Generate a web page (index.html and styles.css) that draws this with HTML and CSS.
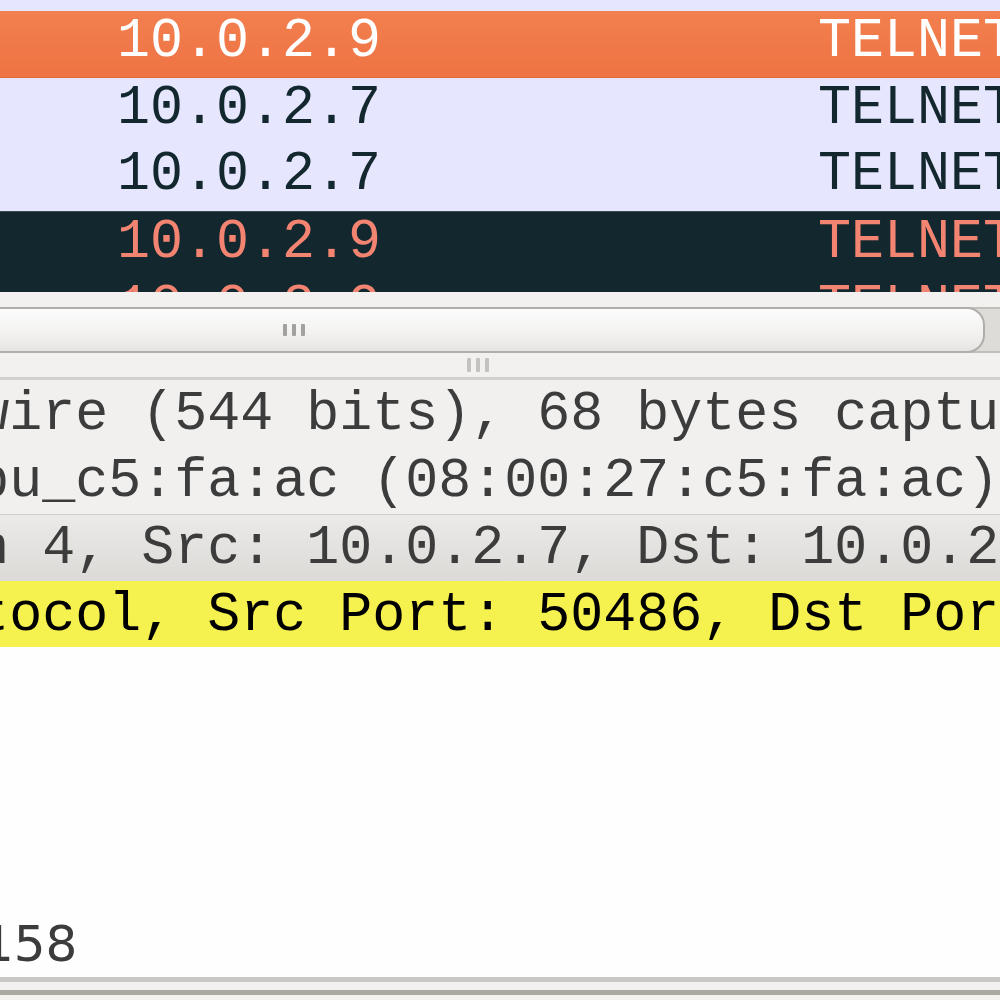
FILE: index.html
```html
<!DOCTYPE html>
<html>
<head>
<meta charset="utf-8">
<link rel="stylesheet" href="styles.css">
</head>
<body>
<div class="app">
  <div class="list">
    <div class="row tcp partial-top"></div>
    <div class="row selected"><span class="c-dst">10.0.2.9</span><span class="c-proto">TELNET</span></div>
    <div class="row tcp"><span class="c-dst">10.0.2.7</span><span class="c-proto">TELNET</span></div>
    <div class="row tcp"><span class="c-dst">10.0.2.7</span><span class="c-proto">TELNET</span></div>
    <div class="row bad"><span class="c-dst">10.0.2.9</span><span class="c-proto">TELNET</span></div>
    <div class="row bad partial-bottom"><span class="c-dst">10.0.2.9</span><span class="c-proto">TELNET</span></div>
  </div>
  <div class="hscroll">
    <div class="hscroll-gap"></div>
    <div class="trough">
      <div class="thumb"><span class="grip"><i></i><i></i><i></i></span></div>
    </div>
  </div>
  <div class="splitter"><span class="grip grip-split"><i></i><i></i><i></i></span></div>
  <div class="tree">
    <div class="tree-inner">
      <div class="node">Frame 1158: 68 bytes on wire (544 bits), 68 bytes captured (544 bits) on interface 0</div>
      <div class="node">Ethernet II, Src: PcsCompu_c5:fa:ac (08:00:27:c5:fa:ac), Dst: PcsCompu_8f:3a:0b</div>
      <div class="node hover">Internet Protocol Version 4, Src: 10.0.2.7, Dst: 10.0.2.9</div>
      <div class="node warn">Transmission Control Protocol, Src Port: 50486, Dst Port: 23, Seq: 1, Ack: 1</div>
    </div>
  </div>
  <div class="bytes">
    <div class="bytes-line">158</div>
  </div>
  <div class="statusbar">
    <div class="sb-line1"></div>
    <div class="sb-mid"></div>
    <div class="sb-line2"></div>
    <div class="sb-bottom"></div>
  </div>
</div>
</body>
</html>
```

FILE: styles.css
```css
* { box-sizing: border-box; }
html, body { margin: 0; padding: 0; }
body {
  width: 1000px;
  height: 1000px;
  overflow: hidden;
  background: #f2f1f0;
}
.app {
  display: flex;
  flex-direction: column;
  width: 1000px;
  height: 1000px;
  overflow: hidden;
}

/* packet list */
.list {
  height: 292px;
  flex: none;
  overflow: hidden;
  background: #e7e6ff;
  font-family: "Liberation Mono", monospace;
  font-size: 55px;
}
.row {
  display: flex;
  height: 66.5px;
  line-height: 62px;
  white-space: nowrap;
  overflow: hidden;
}
.row.partial-top { height: 11px; }
.row.partial-bottom { height: 15px; }
.c-dst {
  width: 818px;
  padding-left: 117px;
  flex: none;
}
.c-proto { flex: none; }
.tcp { background: #e7e6ff; color: #12272e; }
.selected {
  background: linear-gradient(#f27f4f, #ef7343);
  color: #ffffff;
  border-bottom: 1px solid #e46b3a;
}
.bad { background: #12272e; color: #f48472; }
.bad:not(.partial-bottom) { border-top: 1px solid #3d4b52; }

/* horizontal scrollbar */
.hscroll {
  flex: none;
  height: 61px;
  display: flex;
  flex-direction: column;
  background: #f2f1f0;
}
.hscroll-gap { height: 15px; flex: none; }
.trough {
  flex: 1;
  display: flex;
  background: #dedcd9;
  border-top: 2px solid #c2bfbb;
  border-bottom: 2px solid #c2bfbb;
}
.thumb {
  width: 985px;
  margin: -2px 0;
  display: flex;
  align-items: center;
  padding-left: 283px;
  background: linear-gradient(#fcfcfc, #f3f2f1 55%, #e6e5e3);
  border: 2px solid #b0aeaa;
  border-left: none;
  border-radius: 0 18px 18px 0;
}
.grip {
  display: flex;
  gap: 5px;
}
.grip i {
  display: block;
  width: 4px;
  height: 12px;
  background: #a3a19e;
  border-radius: 1px;
}
.splitter {
  flex: none;
  height: 27px;
  display: flex;
  align-items: center;
  justify-content: flex-start;
  padding-left: 467px;
  background: #f2f1f0;
  border-bottom: 3px solid #d2d0cd;
}
.grip-split i { background: #c4c2bf; height: 14px; }

/* details tree */
.tree {
  flex: none;
  height: 267px;
  overflow: hidden;
  background: #fdfdfd;
  font-family: "Liberation Mono", monospace;
  font-size: 55px;
  color: #3c3c3c;
}
.tree-inner { margin-left: -816px; }
.node {
  height: 67px;
  line-height: 69px;
  white-space: nowrap;
  overflow: hidden;
  background: #f1f0ef;
}
.node.hover {
  background: linear-gradient(#ebeae8, #dbdad7);
  border-top: 1px solid #d0cecb;
  line-height: 67px;
}
.node.warn {
  background: #f5f14f;
  color: #000000;
}

/* bytes */
.bytes {
  flex: none;
  height: 330px;
  background: #fefefe;
  padding-top: 268px;
  font-family: "DejaVu Sans", sans-serif;
  font-size: 50px;
  color: #3c3c3c;
  overflow: hidden;
}
.bytes-line {
  line-height: 58px;
  text-indent: -18px;
  white-space: nowrap;
}

/* status bar edges */
.statusbar { flex: none; display: flex; flex-direction: column; }
.sb-line1 { height: 5px; background: #cac8c5; }
.sb-mid { height: 8px; background: #f2f1f0; }
.sb-line2 { height: 5px; background: #aba8a4; }
.sb-bottom { height: 5px; background: #f2f1f0; }
```
